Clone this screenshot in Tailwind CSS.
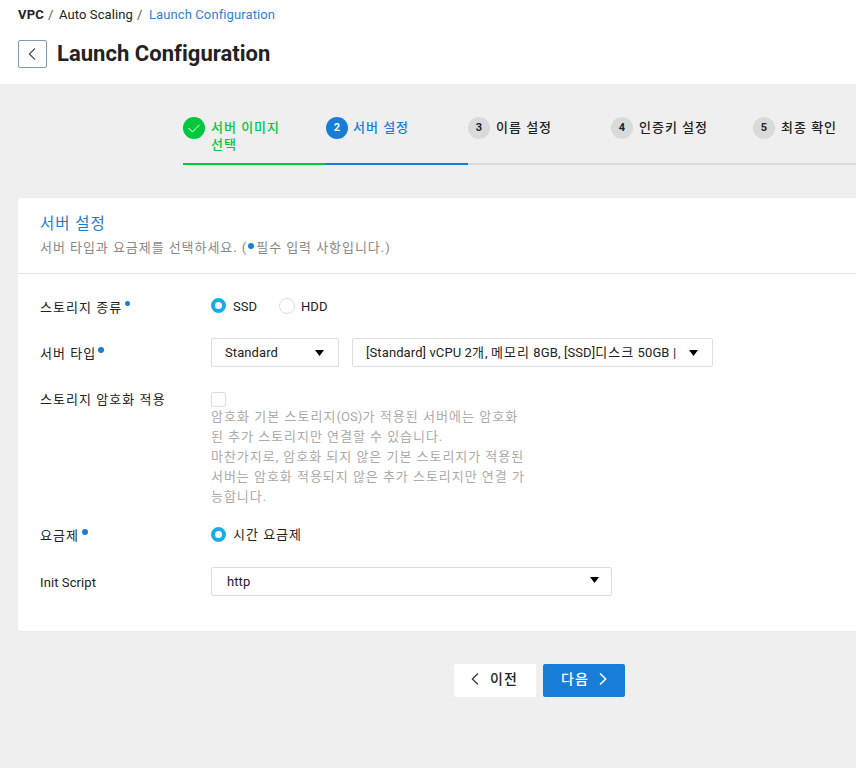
<!DOCTYPE html>
<html lang="ko">
<head>
<meta charset="utf-8">
<title>Launch Configuration</title>
<script src="https://cdn.jsdelivr.net/npm/@tailwindcss/browser@4"></script>
</head>
<body class="w-[856px] h-[768px] overflow-hidden bg-[#efefef] text-[#222] text-[13px] leading-5 font-['Roboto','Noto_Sans_CJK_KR',sans-serif]">
<header class="h-[84px] bg-white pl-[18px] overflow-hidden">
  <nav class="flex h-[29px] items-center whitespace-pre">
    <b class="w-[30px] tracking-[0.2px] font-bold">VPC</b><span class="w-[11px] text-[#555]">/</span><span class="w-[78px] tracking-[0.1px]">Auto Scaling</span><span class="w-[12px] text-[#555]">/</span><a class="text-[#2f80dc] tracking-[0.1px]">Launch Configuration</a>
  </nav>
  <div class="flex items-center mt-[11px]">
    <button class="w-[29px] h-[28px] rounded-[2px] border border-[#7f9bb8] flex items-center justify-center pr-[2px]">
      <svg width="8" height="12" viewBox="0 0 8 12" fill="none" stroke="#444" stroke-width="1.1"><path d="M7 .5 1.3 6 7 11.5"/></svg>
    </button>
    <h1 class="ml-[10px] text-[22px] leading-7 font-bold tracking-[0.03px]">Launch Configuration</h1>
  </div>
</header>

<ol class="ml-[183px] mt-[32px] flex w-[673px] h-[49px] font-medium">
  <li class="w-[143px] shrink-0 flex border-b-2 border-[#00c73c] text-[#00c73c]">
    <span class="size-[22px] shrink-0 rounded-full bg-[#00c73c] mt-px flex items-center justify-center"><svg width="12" height="9" viewBox="0 0 12 9" fill="none" stroke="#fff" stroke-width="1"><path d="M.5 4 4.5 8 11.5 .8"/></svg></span>
    <span class="ml-[6px] mt-[3px] leading-[17px] tracking-[1px] whitespace-nowrap">서버 이미지<br>선택</span>
  </li>
  <li class="w-[142px] shrink-0 flex border-b-2 border-[#187dd9] text-[#187dd9]">
    <span class="size-[22px] shrink-0 rounded-full bg-[#187dd9] text-white mt-px text-[11px] font-bold flex items-center justify-center">2</span>
    <span class="ml-[5px] mt-[3px] leading-[17px] tracking-[1px]">서버 설정</span>
  </li>
  <li class="w-[143px] shrink-0 flex border-b-2 border-[#dadada]">
    <span class="size-[22px] shrink-0 rounded-full bg-[#dadada] mt-px text-[11px] font-bold flex items-center justify-center">3</span>
    <span class="ml-[6px] mt-[3px] leading-[17px] tracking-[1px]">이름 설정</span>
  </li>
  <li class="w-[142px] shrink-0 flex border-b-2 border-[#dadada]">
    <span class="size-[22px] shrink-0 rounded-full bg-[#dadada] mt-px text-[11px] font-bold flex items-center justify-center">4</span>
    <span class="ml-[6px] mt-[3px] leading-[17px] tracking-[1px]">인증키 설정</span>
  </li>
  <li class="w-[103px] shrink-0 flex border-b-2 border-[#dadada]">
    <span class="size-[22px] shrink-0 rounded-full bg-[#dadada] mt-px text-[11px] font-bold flex items-center justify-center">5</span>
    <span class="ml-[6px] mt-[3px] leading-[17px] tracking-[1px]">최종 확인</span>
  </li>
</ol>

<section class="ml-[18px] mt-[33px] w-[838px] h-[433px] bg-white rounded-l-[2px] shadow-[0_0_1px_#d0d0d0]">
  <div class="h-[76px] pl-[22px] pt-[14px] border-b border-[#e3e3e3]">
    <h2 class="text-[15.5px] leading-6 text-[#187dd9] tracking-[1px]">서버 설정</h2>
    <p class="flex text-[#888] whitespace-pre tracking-[0.95px] mt-[2px]">서버 타입과 요금제를 선택하세요. (<i class="size-[6px] rounded-full bg-[#187dd9] mt-[5px] ml-px mr-[2px]"></i>필수 입력 사항입니다.)</p>
  </div>
  <div class="pl-[22px] pt-[15px]">
    <div class="flex h-[46px]">
      <div class="w-[171px] flex pt-[9px] tracking-[1.05px]">스토리지 종류<i class="size-[5px] rounded-full bg-[#187dd9] mt-[3px] ml-[3px]"></i></div>
      <div class="flex pt-[7px]">
        <i class="size-[15px] rounded-full border-4 border-[#16adee] mt-[2px]"></i><span class="ml-[7px] mt-px w-[46px]">SSD</span>
        <i class="size-[16px] rounded-full border border-[#ddd] mt-[2px]"></i><span class="ml-[6px] mt-px tracking-[0.1px]">HDD</span>
      </div>
    </div>
    <div class="flex h-[46px]">
      <div class="w-[171px] flex pt-[9px] tracking-[1.05px]">서버 타입<i class="size-[6px] rounded-full bg-[#187dd9] mt-[3px] ml-[2px]"></i></div>
      <div class="flex pt-[3px] gap-[13px]">
        <div class="w-[128px] h-[29px] rounded-[2px] border border-[#ddd] flex items-center justify-between pl-[13px] pr-[14px]"><span class="tracking-[0.1px]">Standard</span><svg width="9" height="6" viewBox="0 0 9 6"><path d="M0 0h9L4.5 6z"/></svg></div>
        <div class="w-[361px] h-[29px] rounded-[2px] border border-[#ddd] flex items-center justify-between pl-[13px] pr-[14px] whitespace-nowrap"><span class="tracking-[0.1px]">[Standard] vCPU 2<span class="tracking-[1.05px]">개</span>, <span class="tracking-[1.05px]">메모리</span> 8GB, [SSD]<span class="tracking-[1.05px]">디스크</span> 50GB |</span><svg width="9" height="6" viewBox="0 0 9 6"><path d="M0 0h9L4.5 6z"/></svg></div>
      </div>
    </div>
    <div class="flex h-[137px]">
      <div class="w-[171px] pt-[9px] tracking-[1.05px]">스토리지 암호화 적용</div>
      <div>
        <div class="mt-[11px] size-[15px] rounded-[2px] border border-[#ddd]"></div>
        <p class="text-[#aaa] whitespace-nowrap tracking-[0.97px]"><span class="tracking-[1.03px]">암호화 기본 스토리지<span class="tracking-[0.1px]">(OS)</span>가 적용된 서버에는 암호화</span><br>된 추가 스토리지만 연결할 수 있습니다.<br>마찬가지로, 암호화 되지 않은 기본 스토리지가 적용된<br>서버는 암호화 적용되지 않은 추가 스토리지만 연결 가<br>능합니다.</p>
      </div>
    </div>
    <div class="flex h-[46px]">
      <div class="w-[171px] flex pt-[8px] tracking-[1.05px]">요금제<i class="size-[6px] rounded-full bg-[#187dd9] mt-[3px] ml-[3px]"></i></div>
      <div class="flex pt-[7px]">
        <i class="size-[15px] rounded-full border-4 border-[#16adee] mt-[2px]"></i><span class="ml-[7px] tracking-[1px]">시간 요금제</span>
      </div>
    </div>
    <div class="flex h-[46px]">
      <div class="w-[171px] pt-[9px] tracking-[0.1px]">Init Script</div>
      <div class="mt-[3px] w-[401px] h-[29px] rounded-[2px] border border-[#ddd] flex items-center justify-between pl-[15px] pr-[12px]"><span class="tracking-[0.1px]">http</span><svg class="mb-[4px]" width="9" height="6" viewBox="0 0 9 6"><path d="M0 0h9L4.5 6z"/></svg></div>
    </div>
  </div>
</section>

<div class="flex gap-[7px] ml-[454px] mt-[33px] text-[14px] font-medium tracking-[1.1px]">
  <button class="w-[82px] h-[33px] rounded-[2px] bg-white flex items-center pb-[3px] pl-[17px] gap-[11px]"><svg width="8" height="12" viewBox="0 0 8 12" fill="none" stroke="#333" stroke-width="1.2"><path d="M7 .5 1.3 6 7 11.5"/></svg>이전</button>
  <button class="w-[82px] h-[33px] rounded-[2px] bg-[#187dd9] text-white flex items-center pb-[3px] pl-[18px] gap-[10px]">다음<svg width="8" height="12" viewBox="0 0 8 12" fill="none" stroke="#fff" stroke-width="1.5"><path d="M1 .5 6.7 6 1 11.5"/></svg></button>
</div>
</body>
</html>
